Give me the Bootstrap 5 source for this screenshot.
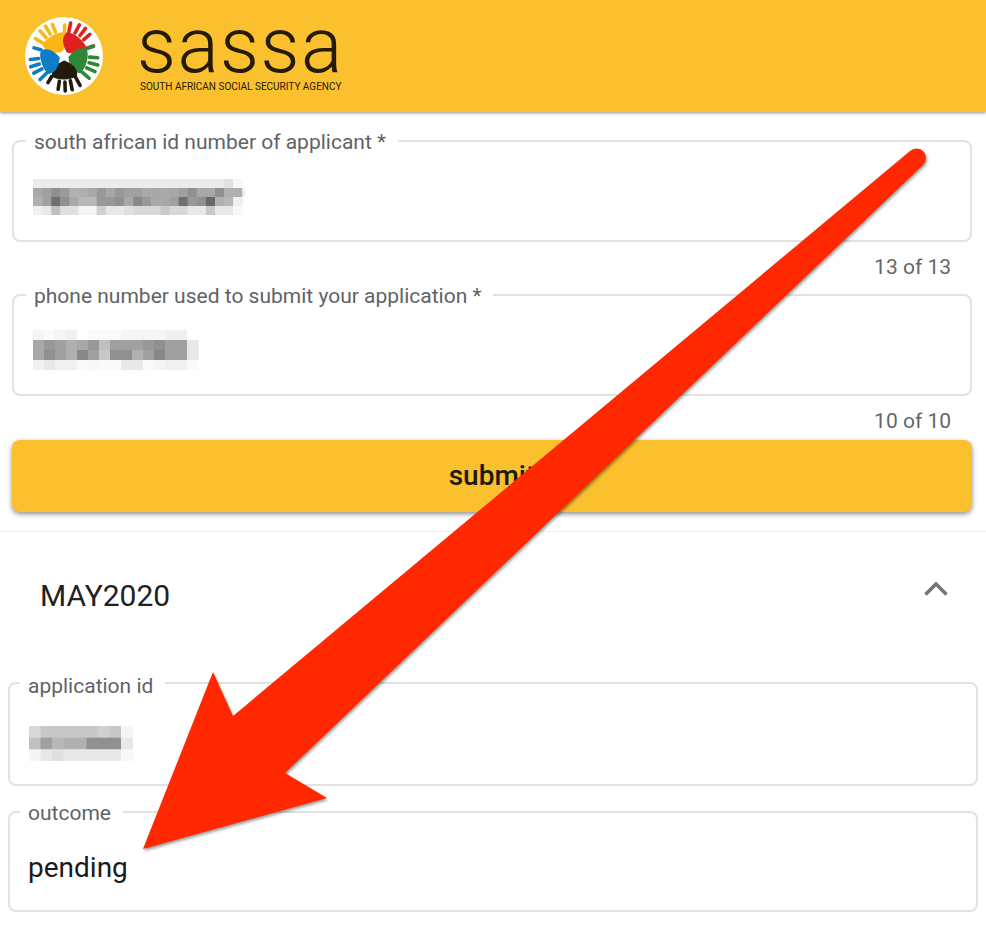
<!DOCTYPE html>
<html lang="en">
<head>
    <meta charset="UTF-8">
    <title>SASSA status check</title>
    <meta name="viewport" content="width=device-width, initial-scale=1">
    <link href="https://cdn.jsdelivr.net/npm/bootstrap@5.3.0/dist/css/bootstrap.min.css" rel="stylesheet">
    <style>
        body { font-family: Roboto, "Liberation Sans", sans-serif; color: #1c1c1c; background: #fff; }
        .sassa-head { background: #fbc02d; height: 112px; padding: 0 0 0 25px; box-shadow: 0 1px 3px rgba(0,0,0,.45); }
        .sassa-logo { width: 78px; height: 78px; margin-right: 37px; }
        .sassa-word { font-size: 77px; font-weight: 300; line-height: 52px; letter-spacing: 1.4px; color: #231a08; margin-left: -3px; }
        .sassa-sub { font-size: 10px; line-height: 12px; color: #231a08; margin-top: 9px; white-space: nowrap; }
        .word-block { margin-top: 1px; }
        .form-wrap { padding: 16px 14px 0 12px; }
        .field-box { border: 2px solid #e2e2e2; border-radius: 8px; height: 114px; padding: 0; margin: 0; min-width: 0; }
        .field-box legend { float: none; width: auto; font-size: 21px; line-height: 24px; color: #5f6368; padding: 2px 12px 0 8px; margin: 0 0 0 12px; }
        .field-box.tight { height: 118px; }
        .field-box.tight legend { margin-left: 10px; }
        .field-box.tight .legend-low { padding-top: 6px; }
        .mosaic { display: block; margin-left: 19px; }
        .mosaic-id { margin-top: 25px; }
        .mosaic-phone { margin-top: 22px; }
        .mosaic-app { margin-top: 28px; }
        .count-line { font-size: 21px; line-height: 24px; color: #666; text-align: right; padding-right: 21px; margin: 13px 0 3px; }
        .count-line.last { margin-bottom: 7px; }
        .submit-btn { height: 72px; background: #fbc02d; border: 0; border-radius: 8px; font-size: 28px; font-weight: 500; color: #1c1a12; box-shadow: 0 2px 5px rgba(0,0,0,.45); }
        .submit-btn:hover { background: #fbc02d; color: #1c1a12; }
        .result-wrap { margin-top: 19px; border-top: 1px solid #eee; padding: 0 8px; }
        .result-head { height: 136px; padding: 0 29px 9px 32px; }
        .result-title { font-size: 30px; line-height: 34px; color: #212121; }
        .chev-icon { margin-top: -14px; margin-right: 1px; }
        .result-val { font-size: 28px; line-height: 34px; color: #1a1a1a; margin: 26px 0 0 18px; }
        .field-gap { margin-top: 13px; }
        .field-box.tight.field-gap { height: 113px; }
        .arrow-layer { position: absolute; left: 0; top: 0; pointer-events: none; }
    </style>
</head>
<body class="position-relative">
<header class="sassa-head d-flex align-items-center">
    <svg class="sassa-logo flex-shrink-0" viewBox="-39 -39 78 78">
        <defs>
            <g id="hand">
                <path d="M0 -5C7 -8 13 -13 12 -20C6 -24 -6 -24 -12 -20C-13 -13 -7 -8 0 -5Z"/>
                <g stroke-width="3.600" stroke-linecap="round">
                    <path d="M-11 -22L-15 -30"/>
                    <path d="M-5.500 -25L-7 -34"/>
                    <path d="M0 -26L0 -35"/>
                    <path d="M5.500 -25L7 -33"/>
                    <path d="M13 -20L17 -26"/>
                </g>
            </g>
        </defs>
        <circle r="39" fill="#fff"/>
        <use href="#hand" fill="#fbb713" stroke="#fbb713" transform="rotate(-32)"/>
        <use href="#hand" fill="#e0201f" stroke="#e0201f" transform="rotate(38)"/>
        <use href="#hand" fill="#2e8737" stroke="#2e8737" transform="rotate(105) scale(-1,1)"/>
        <use href="#hand" fill="#221a0e" stroke="#221a0e" transform="rotate(178)"/>
        <use href="#hand" fill="#0f7cc4" stroke="#0f7cc4" transform="rotate(-108)"/>
    </svg>
    <div class="word-block">
        <div class="sassa-word">sassa</div>
        <div class="sassa-sub">SOUTH AFRICAN SOCIAL SECURITY AGENCY</div>
    </div>
</header>

<form class="form-wrap">
    <fieldset class="field-box">
        <legend>south african id number of applicant *</legend>
        <svg class="mosaic mosaic-id" width="212" height="36" data-cw="9.1" data-rows="ececececececececececececececececececececece2f8|a8a0909ab0b0a898a898a0a0a8a8a8a8a090a8a890b0b0f0|b0a07090a8b8b8989890a88898a8a8a070989068b0b8f0|f0e8c0e0e0f5f5d0e8e8e0d8d8d8c8d8d8e8e8c8e8e8f8"></svg>
    </fieldset>
    <div class="count-line">13 of 13</div>
    <fieldset class="field-box">
        <legend>phone number used to submit your application *</legend>
        <svg class="mosaic mosaic-phone" width="167" height="40" data-cw="11" data-rows="f5faf5f0fffafafaf5f5f5f5f0f0ff|a898a0b0a898c0a0a0a09890a0a0e8|a890a0b088a0c89090b0a088a0a0e8|f0e8f0f0faf8fafae8e8faf5f0f0fa"></svg>
    </fieldset>
    <div class="count-line last">10 of 10</div>
    <button type="button" class="btn submit-btn w-100">submit</button>
</form>

<section class="result-wrap">
    <div class="result-head d-flex justify-content-between align-items-center">
        <div class="result-title">MAY2020</div>
        <svg class="chev-icon" width="24" height="14" viewBox="0 0 24 14"><path d="M1.5 12.500L12 2L22.500 12.500" fill="none" stroke="#757575" stroke-width="3.600"/></svg>
    </div>
    <fieldset class="field-box tight">
        <legend class="legend-low">application id</legend>
        <svg class="mosaic mosaic-app" width="104" height="35" data-cw="11.5" data-rows="d8c8c8c8c8c8d0c8f5|c0a0b8b0b0909090e8|f5e8e0e8e8e8e8e8f8"></svg>
    </fieldset>
    <fieldset class="field-box tight field-gap">
        <legend>outcome</legend>
        <div class="result-val">pending</div>
    </fieldset>
</section>

<svg class="arrow-layer" width="986" height="934" viewBox="0 0 986 934">
    <defs>
        <filter id="arrowShadow" x="-5%" y="-5%" width="110%" height="110%" color-interpolation-filters="sRGB">
            <feDropShadow dx="1" dy="2" stdDeviation="1.500" flood-color="#000" flood-opacity=".4"/>
        </filter>
    </defs>
    <g filter="url(#arrowShadow)">
        <path d="M143 849L213 672L233 716L910 151A9.500 9.500 0 0 1 923 165L285 773L327 798Z" fill="#ff2800"/>
    </g>
</svg>

<script>
    // fills the blurred-out values from the gray levels in data-rows
    document.querySelectorAll('.mosaic').forEach(function (svg) {
        const rows = svg.dataset.rows.split('|');
        const cw = parseFloat(svg.dataset.cw);
        const ch = svg.getAttribute('height') / rows.length;
        let out = '';
        rows.forEach(function (row, y) {
            row.match(/../g).forEach(function (v, x) {
                out += `<rect x="${x * cw}" y="${y * ch}" width="${cw + .5}" height="${ch + .5}" fill="#${v}${v}${v}"/>`;
            });
        });
        svg.innerHTML = out;
    });
</script>
<script src="https://cdn.jsdelivr.net/npm/bootstrap@5.3.0/dist/js/bootstrap.bundle.min.js"></script>
</body>
</html>
